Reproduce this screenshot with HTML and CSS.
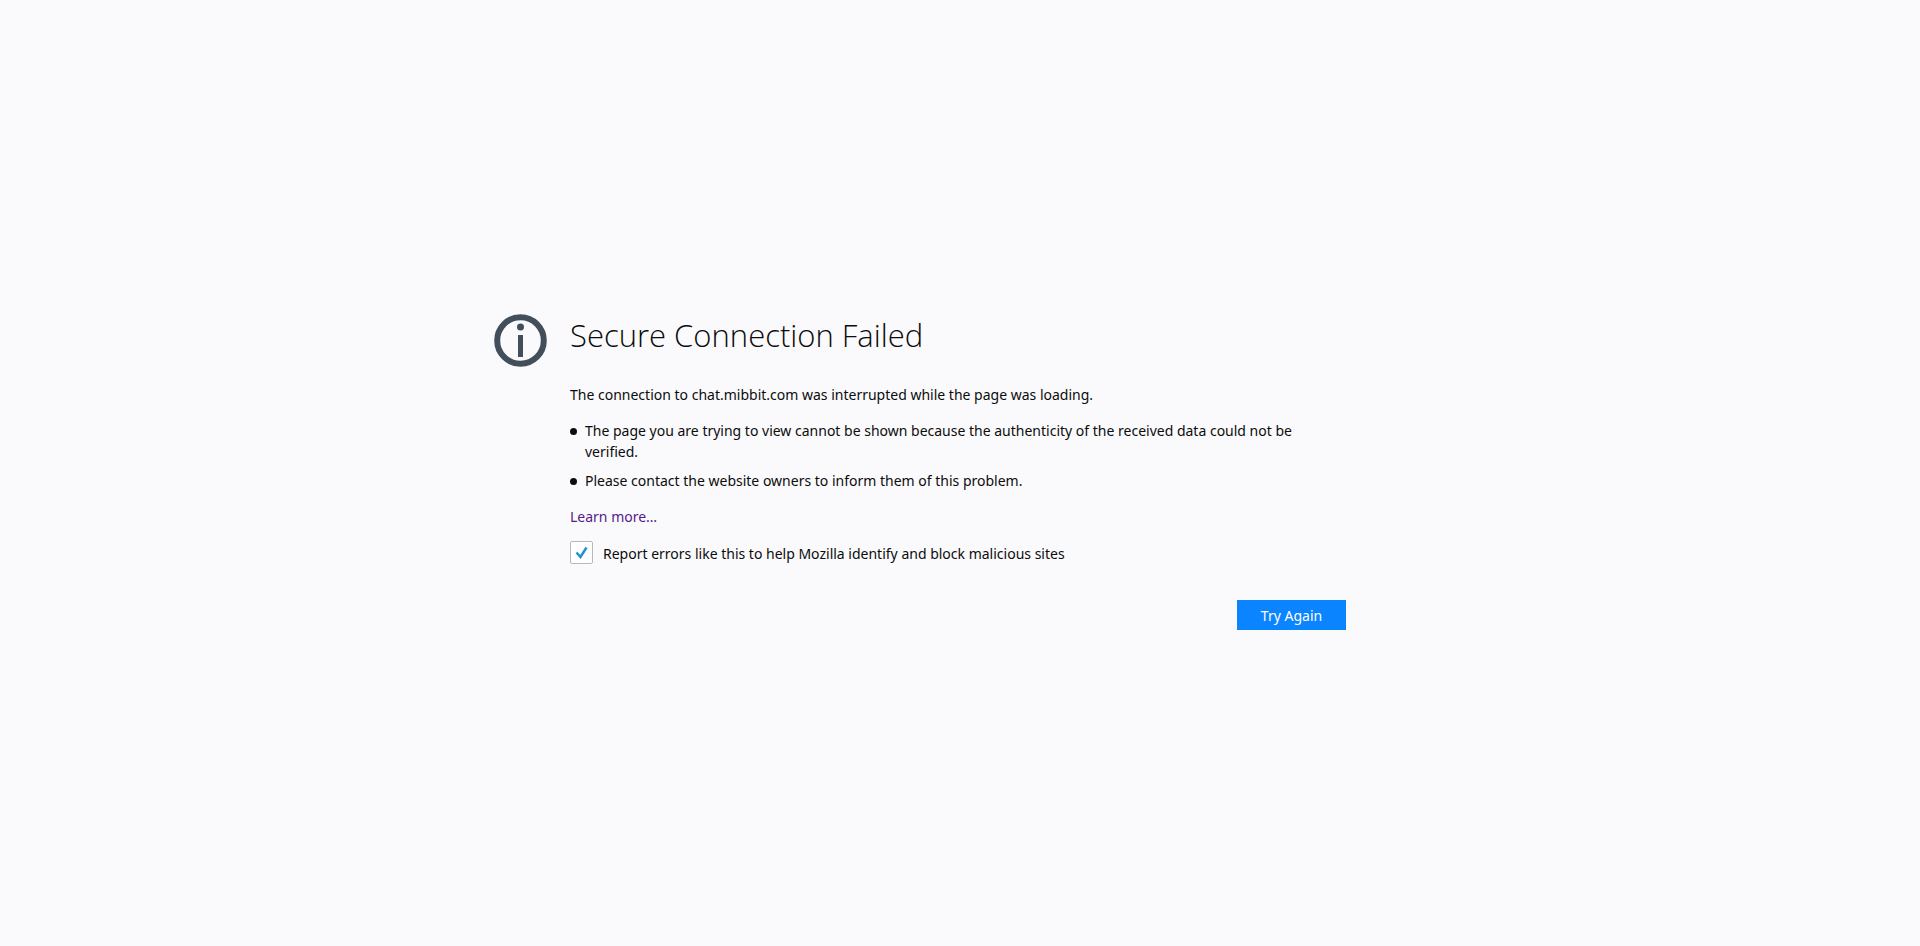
FILE: index.html
```html
<!DOCTYPE html>
<html lang="en">
<head>
<meta charset="utf-8">
<meta name="viewport" content="width=device-width, initial-scale=1">
<title>Secure Connection Failed</title>
<link rel="stylesheet" href="styles.css">
</head>
<body>
<main class="error-page">
  <svg class="info-icon" viewBox="0 0 54 54" aria-hidden="true">
    <circle cx="26.500" cy="26.500" r="23.300" fill="none" stroke="#424f5a" stroke-width="6"/>
    <circle cx="26.500" cy="13" r="3.500" fill="#424f5a"/>
    <path d="M24 21h5v22h-5z" fill="#424f5a"/>
  </svg>
  <div class="content">
    <h1 class="title">Secure Connection Failed</h1>
    <p class="description">The connection to chat.mibbit.com was interrupted while the page was loading.</p>
    <ul class="reasons">
      <li>The page you are trying to view cannot be shown because the authenticity of the received data could not be verified.</li>
      <li>Please contact the website owners to inform them of this problem.</li>
    </ul>
    <a class="learn-more" href="#">Learn more…</a>
    <div class="report">
      <span class="check">
        <input class="check-input" type="checkbox" id="report" checked>
        <svg class="check-mark" viewBox="0 0 23 23" aria-hidden="true">
          <path d="M6.500 11.500l4 4.500 6-9.500" fill="none" stroke="#2292d0" stroke-width="2.500"/>
        </svg>
      </span>
      <label class="report-label" for="report">Report errors like this to help Mozilla identify and block malicious sites</label>
    </div>
    <button class="try-again" type="button">Try Again</button>
  </div>
</main>
</body>
</html>
```
FILE: styles.css
```css
* {
  box-sizing: border-box;
}

body {
  margin: 0;
  min-height: 100vh;
  padding-bottom: 2px;
  display: flex;
  align-items: center;
  justify-content: center;
  background: #fafafc;
  color: #0c0c0d;
  font: 14px/21px "Noto Sans", "Open Sans", sans-serif;
}

.error-page {
  display: flex;
  align-items: flex-start;
  gap: 22px;
  width: 100%;
  max-width: 932px;
  padding-right: 80px;
}

.info-icon {
  flex: none;
  width: 54px;
  height: 54px;
}

.content {
  flex: 1;
  display: flex;
  flex-direction: column;
  align-items: flex-start;
}

.title {
  margin: 0 0 28px;
  font-family: "Open Sans", "Noto Sans", sans-serif;
  font-size: 31px;
  line-height: 42px;
  font-weight: 300;
}

.description {
  margin: 0 0 15px;
}

.reasons {
  display: grid;
  gap: 8px;
  margin: 0 0 15px;
  padding: 0;
  list-style: none;
}

.reasons li {
  display: flex;
  gap: 8px;
  padding-right: 24px;
}

.reasons li::before {
  content: "";
  flex: none;
  width: 7px;
  height: 7px;
  margin-top: 8px;
  border-radius: 50%;
  background: #0c0c0d;
}

.learn-more {
  color: #551a8b;
  text-decoration: none;
}

.report {
  display: flex;
  align-items: flex-end;
  gap: 10px;
  margin-top: 14px;
}

.check {
  display: grid;
  width: 23px;
  height: 23px;
}

.check-input,
.check-mark {
  grid-area: 1 / 1;
  width: 23px;
  height: 23px;
  margin: 0;
}

.check-input {
  appearance: none;
  border: 1px solid #b8b8bc;
  border-radius: 2px;
  background: #fff;
}

.check-mark {
  pointer-events: none;
  visibility: hidden;
}

.check-input:checked + .check-mark {
  visibility: visible;
}

.try-again {
  align-self: flex-end;
  margin-top: 36px;
  min-width: 109px;
  height: 30px;
  padding: 0 20px;
  border: 0;
  background: #0a84ff;
  color: #fff;
  font: inherit;
}
```
